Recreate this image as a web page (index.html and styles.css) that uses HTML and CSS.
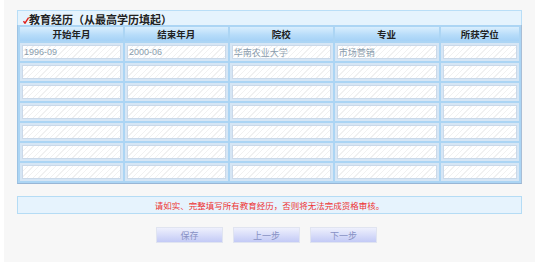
FILE: index.html
```html
<!DOCTYPE html>
<html lang="zh-CN">
<head>
    <meta charset="UTF-8">
    <title>教育经历</title>
    <link rel="stylesheet" href="styles.css">
</head>
<body>
    <div class="page">
        <div class="title-bar">
            <svg class="tick" width="6" height="7" viewBox="0 0 6 7"><path d="M0.5 4.2 L2 6.2 L5.6 0.6" fill="none" stroke="#e0201c" stroke-width="1.4"/></svg>
            <span>教育经历（从最高学历填起）</span>
        </div>
        <table class="edu">
            <thead>
                <tr>
                    <th class="c1">开始年月</th>
                    <th class="c2">结束年月</th>
                    <th class="c3">院校</th>
                    <th class="c4">专业</th>
                    <th class="c5">所获学位</th>
                </tr>
            </thead>
            <tbody>
                <tr>
                    <td><input type="text" value="1996-09"></td>
                    <td><input type="text" value="2000-06"></td>
                    <td><input type="text" value="华南农业大学"></td>
                    <td><input type="text" value="市场营销"></td>
                    <td><input type="text"></td>
                </tr>
                <tr><td><input type="text"></td><td><input type="text"></td><td><input type="text"></td><td><input type="text"></td><td><input type="text"></td></tr>
                <tr><td><input type="text"></td><td><input type="text"></td><td><input type="text"></td><td><input type="text"></td><td><input type="text"></td></tr>
                <tr><td><input type="text"></td><td><input type="text"></td><td><input type="text"></td><td><input type="text"></td><td><input type="text"></td></tr>
                <tr><td><input type="text"></td><td><input type="text"></td><td><input type="text"></td><td><input type="text"></td><td><input type="text"></td></tr>
                <tr><td><input type="text"></td><td><input type="text"></td><td><input type="text"></td><td><input type="text"></td><td><input type="text"></td></tr>
                <tr><td><input type="text"></td><td><input type="text"></td><td><input type="text"></td><td><input type="text"></td><td><input type="text"></td></tr>
            </tbody>
        </table>
        <div class="notice">请如实、完整填写所有教育经历，否则将无法完成资格审核。</div>
        <div class="actions">
            <button>保存</button>
            <button>上一步</button>
            <button>下一步</button>
        </div>
    </div>
</body>
</html>
```

FILE: styles.css
```css
* {
    box-sizing: border-box;
}
body {
    margin: 0;
    background: #fff;
    font-family: "Liberation Sans", "Noto Sans CJK SC", sans-serif;
}
.page {
    margin: 0 2px 0 4px;
    height: 262px;
    background: #f7f7f7;
    padding: 10px 13px 0 13px;
}
.title-bar {
    height: 16px;
    background: #e5f3fd;
    border: 1px solid #b9def7;
    border-bottom: none;
    display: flex;
    align-items: center;
    padding-left: 5px;
    font-size: 11px;
    font-weight: bold;
    color: #222;
}
.tick {
    margin-top: 3px;
}
.edu {
    width: 100%;
    border-collapse: separate;
    border-spacing: 2px;
    background: #acd5f4;
    border-left: 1px solid #9cc3e4;
    border-bottom: 1px solid #98b6d6;
    border-right: 1px solid #a8bed6;
    table-layout: fixed;
    margin-top: -1px;
}
.edu th {
    height: 14px;
    padding: 0;
    font-size: 9.5px;
    color: #222;
    background: linear-gradient(#d9eefd, #b5dbf9 60%, #a6d2f6);
}
.c1, .c2, .c3 { width: 21%; }
.c4 { width: 21.2%; }
.c5 { width: 16%; }
.edu td {
    padding: 2px;
    background: #d6e6f5;
    height: 18px;
}
.edu input {
    display: block;
    width: 100%;
    height: 14px;
    margin: 0;
    padding: 0 1px;
    border: 1px solid #cbd9e9;
    outline: none;
    font-family: "Liberation Sans", "Noto Sans CJK SC", sans-serif;
    font-size: 9px;
    color: #8a9cad;
    background: repeating-linear-gradient(135deg, #fff 0 3px, #f1f1f1 3px 4px);
}
.notice {
    margin-top: 12px;
    height: 18px;
    background: #e6f3fd;
    border: 1px solid #b5dcf5;
    display: flex;
    align-items: center;
    justify-content: center;
    font-size: 8.5px;
    color: #ee3333;
}
.actions {
    display: flex;
    justify-content: center;
    gap: 10px;
    margin-top: 13px;
    padding-right: 6px;
}
.actions button {
    width: 67px;
    height: 16px;
    padding: 0;
    border: 1px solid #e0e4f0;
    background: linear-gradient(#eef0fd, #c3caf6);
    font-family: "Liberation Sans", "Noto Sans CJK SC", sans-serif;
    font-size: 9px;
    color: #8891c4;
}
```
